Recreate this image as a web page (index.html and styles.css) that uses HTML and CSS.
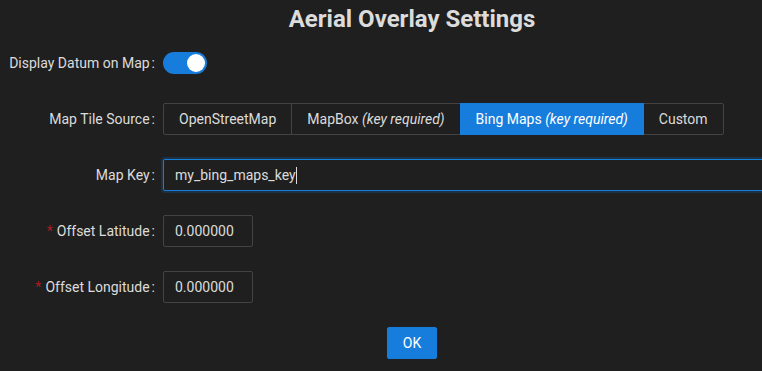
FILE: index.html
```html
<!DOCTYPE html>
<html lang="en">

<head>
  <title>Aerial Overlay Settings</title>
  <meta charset="utf-8">
  <meta name="viewport" content="width=device-width, initial-scale=1.0">
  <link rel="stylesheet" href="styles.css">
</head>

<body>
  <div class="dialog">
    <h1 class="title">Aerial Overlay Settings</h1>

    <div class="form-row">
      <label class="form-label">Display Datum on Map</label>
      <div class="form-control">
        <button class="switch switch-on"><span class="switch-handle"></span></button>
      </div>
    </div>

    <div class="form-row">
      <label class="form-label">Map Tile Source</label>
      <div class="form-control">
        <div class="radio-group">
          <span class="radio-button">OpenStreetMap</span>
          <span class="radio-button">MapBox <em>(key required)</em></span>
          <span class="radio-button radio-checked">Bing Maps <em>(key required)</em></span>
          <span class="radio-button">Custom</span>
        </div>
      </div>
    </div>

    <div class="form-row">
      <label class="form-label">Map Key</label>
      <div class="form-control">
        <div class="text-input input-focused">my_bing_maps_key<span class="caret"></span></div>
      </div>
    </div>

    <div class="form-row">
      <label class="form-label"><span class="required">*</span>Offset Latitude</label>
      <div class="form-control">
        <input class="number-input" type="text" value="0.000000">
      </div>
    </div>

    <div class="form-row">
      <label class="form-label"><span class="required">*</span>Offset Longitude</label>
      <div class="form-control">
        <input class="number-input" type="text" value="0.000000">
      </div>
    </div>

    <div class="footer">
      <button class="ok-button">OK</button>
    </div>
  </div>
</body>

</html>
```

FILE: styles.css
```css
html, body {
  margin: 0;
  padding: 0;
  background-color: #1f1f1f;
  overflow: hidden;
}

body {
  font-family: Roboto, "Liberation Sans", sans-serif;
  font-size: 14px;
  color: rgba(255, 255, 255, 0.85);
}

.dialog {
  width: 824px;
}

.title {
  margin: 0 0 9px;
  font-size: 24px;
  font-weight: 700;
  line-height: 38px;
  text-align: center;
  color: rgba(255, 255, 255, 0.85);
}

.form-row {
  display: flex;
  align-items: center;
  height: 32px;
  margin-bottom: 24px;
}

.form-label {
  flex: 0 0 163px;
  text-align: right;
  white-space: nowrap;
  box-sizing: border-box;
  padding-right: 8px;
}

.form-label::after {
  content: ":";
  margin-left: 2px;
}

.required {
  color: #a61d24;
  margin-right: 4px;
}

.form-control {
  flex: 1;
  display: flex;
  align-items: center;
}

.switch {
  position: relative;
  width: 44px;
  height: 22px;
  padding: 0;
  border: none;
  border-radius: 11px;
  background-color: #177ddc;
}

.switch-handle {
  position: absolute;
  top: 2px;
  right: 2px;
  width: 18px;
  height: 18px;
  border-radius: 50%;
  background-color: #fff;
}

.radio-group {
  display: flex;
  height: 32px;
}

.radio-button {
  display: block;
  padding: 0 15px;
  border: 1px solid #434343;
  margin-left: -1px;
  line-height: 30px;
  white-space: nowrap;
}

.radio-button:first-child {
  margin-left: 0;
  border-radius: 2px 0 0 2px;
}

.radio-button:last-child {
  border-radius: 0 2px 2px 0;
}

.radio-checked {
  position: relative;
  background-color: #177ddc;
  border-color: #177ddc;
  color: #fff;
}

.text-input {
  flex: 1;
  display: flex;
  align-items: center;
  height: 32px;
  box-sizing: border-box;
  padding: 0 11px;
  border: 1px solid #434343;
  border-radius: 2px;
}

.input-focused {
  border-color: #177ddc;
  box-shadow: 0 0 0 2px rgba(23, 125, 220, 0.2);
}

.caret {
  width: 1px;
  height: 17px;
  background-color: rgba(255, 255, 255, 0.85);
}

.number-input {
  width: 90px;
  height: 32px;
  box-sizing: border-box;
  padding: 0 11px;
  border: 1px solid #434343;
  border-radius: 2px;
  background: transparent;
  font-family: inherit;
  font-size: 14px;
  color: rgba(255, 255, 255, 0.85);
}

.footer {
  display: flex;
  justify-content: center;
}

.ok-button {
  height: 32px;
  padding: 0 15px;
  border: 1px solid #177ddc;
  border-radius: 2px;
  background-color: #177ddc;
  color: #fff;
  font-family: inherit;
  font-size: 14px;
}
```
